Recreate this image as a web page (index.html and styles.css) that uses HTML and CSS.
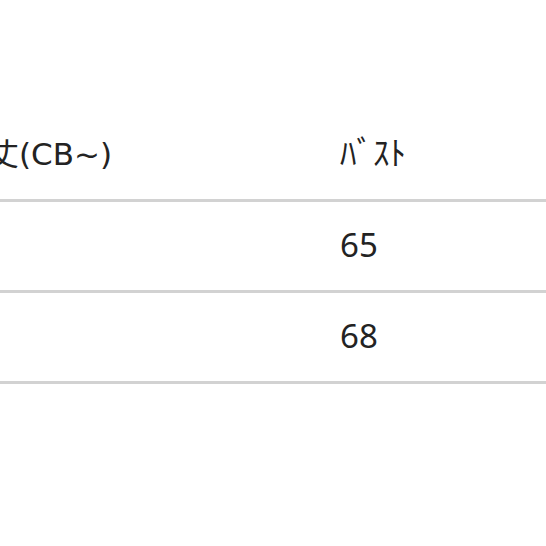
FILE: index.html
```html
<!DOCTYPE html>
<html lang="ja">
<head>
<meta charset="utf-8">
<link rel="stylesheet" href="styles.css">
</head>
<body>
<div class="sheet">
  <div class="size-table">
    <div class="row head">
      <div class="cell c1 label">着丈(CB~)</div>
      <div class="cell c2 kana">ﾊﾞｽﾄ</div>
    </div>
    <div class="row">
      <div class="cell c1"></div>
      <div class="cell c2 num">65</div>
    </div>
    <div class="row">
      <div class="cell c1"></div>
      <div class="cell c2 num">68</div>
    </div>
  </div>
</div>
</body>
</html>
```

FILE: styles.css
```css
html, body {
  margin: 0;
  padding: 0;
  background: #ffffff;
}
.sheet {
  width: 546px;
  height: 546px;
  overflow: hidden;
  padding-top: 111px;
  box-sizing: border-box;
}
.size-table {
  margin-left: -43px;
  width: 620px;
  display: flex;
  flex-direction: column;
}
.row {
  display: grid;
  grid-template-columns: 383px 1fr;
  align-items: center;
  height: 88px;
  border-bottom: 3px solid #d2d2d2;
}
.cell {
  font-family: "Noto Sans", "Noto Sans CJK JP", sans-serif;
  color: #232323;
  white-space: nowrap;
}
.label {
  font-family: "DejaVu Sans", "Noto Sans CJK JP", sans-serif;
  font-size: 31px;
  margin-top: -8px;
}
.kana {
  font-family: "Noto Sans CJK JP", sans-serif;
  font-size: 33px;
  margin-top: -9px;
}
.num {
  font-size: 33px;
  margin-top: -4px;
}
```
